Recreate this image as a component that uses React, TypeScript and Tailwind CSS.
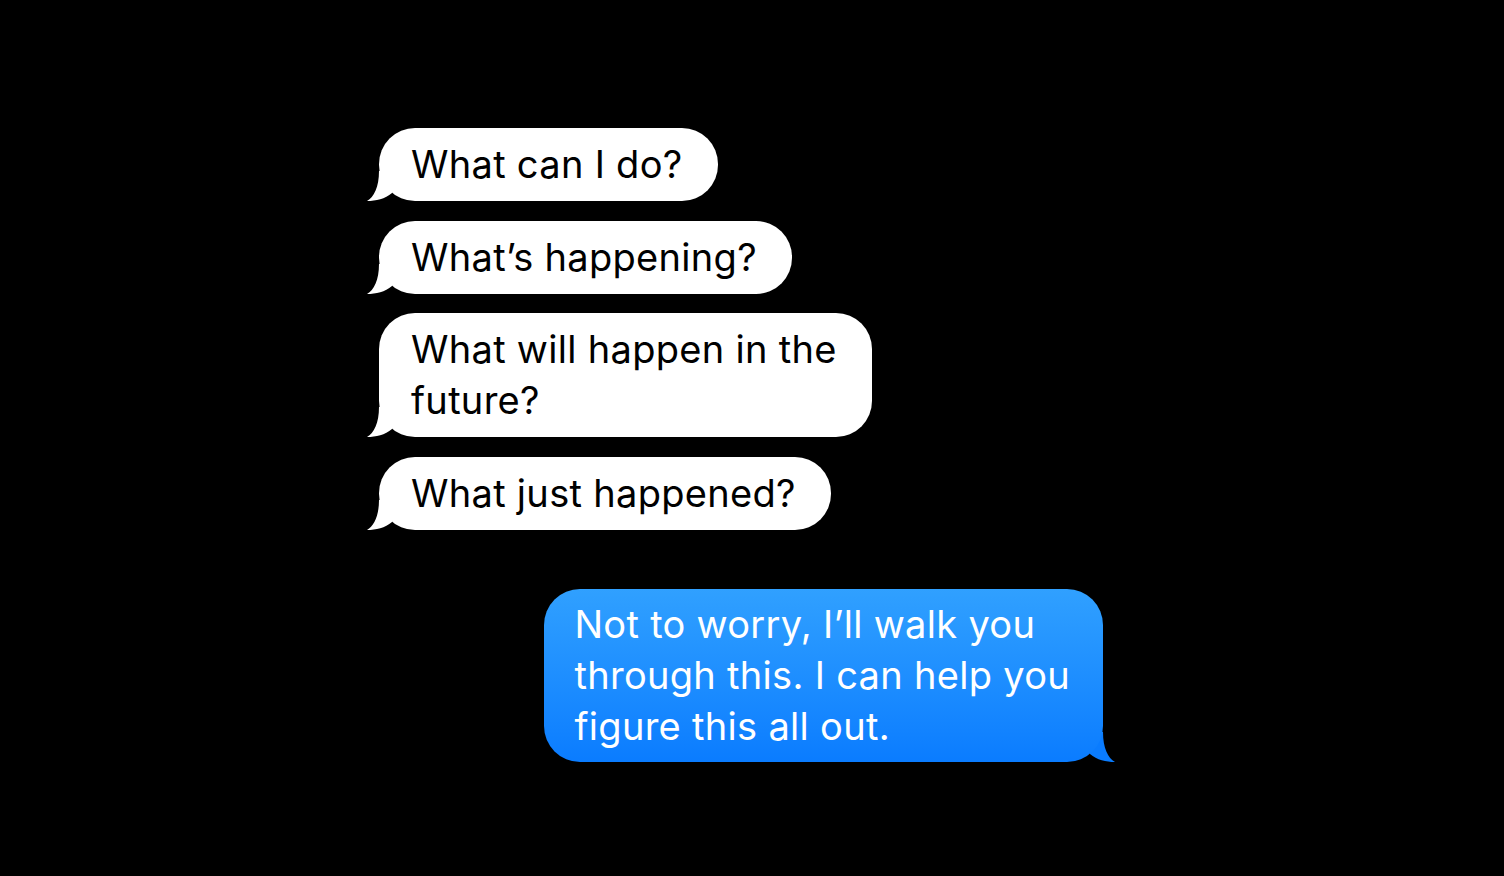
import React from 'react';

const font = { fontFamily: 'Inter, "Noto Sans", sans-serif' };

const LeftTail = () => (
  <svg viewBox="0 0 26 30" className="absolute left-[-12px] bottom-0 w-[26px] h-[30px]">
    <path d="M12 0 C12 16 7 26 0 30 C9 30 18 28 25 22 L25 0 Z" fill="white" />
  </svg>
);

const RightTail = () => (
  <svg viewBox="0 0 26 30" className="absolute right-[-12px] bottom-0 w-[26px] h-[30px]">
    <path d="M14 0 C14 16 19 26 26 30 C17 30 8 28 1 22 L1 0 Z" fill="#0a7cff" />
  </svg>
);

const Incoming: React.FC<{ children: React.ReactNode }> = ({ children }) => (
  <div className="relative self-start">
    <LeftTail />
    <div
      className="relative bg-white text-black rounded-[36px] pl-[32px] pr-[35px] py-[11px] text-[38px] leading-[51px] tracking-[0.3px]"
      style={font}
    >
      {children}
    </div>
  </div>
);

export default function App() {
  return (
    <div className="w-[1504px] h-[876px] bg-black overflow-hidden">
      <div className="flex flex-col gap-[19.5px] pl-[379px] pt-[128px] w-[1103px]">
        <Incoming>What can I do?</Incoming>
        <Incoming>What’s happening?</Incoming>
        <Incoming>
          What will happen in the
          <br />
          future?
        </Incoming>
        <Incoming>What just happened?</Incoming>

        <div className="relative self-end mt-10">
          <RightTail />
          <div
            className="relative rounded-[36px] bg-gradient-to-b from-[#30a0ff] to-[#0a7cff] text-white pl-[30px] pr-[33px] py-[10px] text-[38px] leading-[51px] tracking-[0.3px]"
            style={font}
          >
            Not to worry, I’ll walk you
            <br />
            through this. I can help you
            <br />
            figure this all out.
          </div>
        </div>
      </div>
    </div>
  );
}
